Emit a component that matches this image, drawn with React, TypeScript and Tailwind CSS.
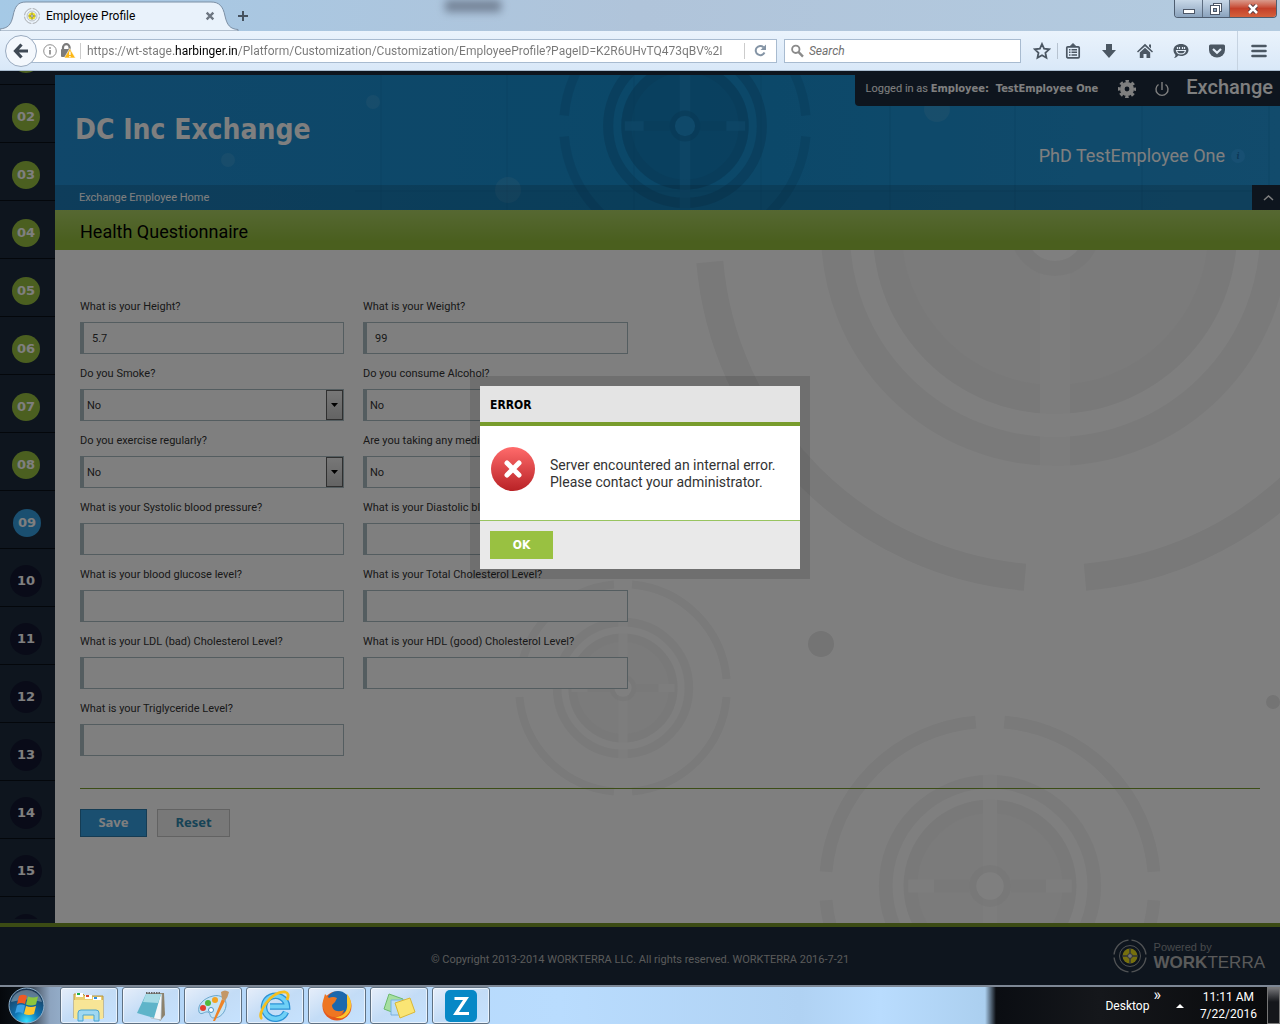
import { useState } from "react";

type Field = { id: string; label: string; type: "text" | "select"; value: string };

const fields: Field[] = [
    { id: "height", label: "What is your Height?", type: "text", value: "5.7" },
    { id: "weight", label: "What is your Weight?", type: "text", value: "99" },
    { id: "smoke", label: "Do you Smoke?", type: "select", value: "No" },
    { id: "alcohol", label: "Do you consume Alcohol?", type: "select", value: "No" },
    { id: "exercise", label: "Do you exercise regularly?", type: "select", value: "No" },
    { id: "medication", label: "Are you taking any medication?", type: "select", value: "No" },
    { id: "systolic", label: "What is your Systolic blood pressure?", type: "text", value: "" },
    { id: "diastolic", label: "What is your Diastolic blood pressure?", type: "text", value: "" },
    { id: "glucose", label: "What is your blood glucose level?", type: "text", value: "" },
    { id: "total", label: "What is your Total Cholesterol Level?", type: "text", value: "" },
    { id: "ldl", label: "What is your LDL (bad) Cholesterol Level?", type: "text", value: "" },
    { id: "hdl", label: "What is your HDL (good) Cholesterol Level?", type: "text", value: "" },
    { id: "triglyceride", label: "What is your Triglyceride Level?", type: "text", value: "" },
];

const steps = ["02", "03", "04", "05", "06", "07", "08", "09", "10", "11", "12", "13", "14", "15"];

// crosshair emblem used as a watermark, radius 360 before scaling
const Target = ({ x, y, scale, color, back, outer }: { x: number; y: number; scale: number; color: string; back: string; outer: number }) => (
    <g transform={`translate(${x} ${y}) scale(${scale})`} stroke={color} fill="none">
        {[0, 90, 180, 270].map((a) => (
            <path key={a} transform={`rotate(${a})`} d="M30 345.2A346.5 346.5 0 0 0 345.2 30" strokeWidth="27" strokeOpacity={outer} />
        ))}
        <circle r="219.5" strokeWidth="29" strokeOpacity=".5" />
        <circle r="182" fill={color} fillOpacity=".45" stroke="none" />
        <circle r="167.5" strokeWidth="29" strokeOpacity=".3" />
        <path d="M0-234V234" stroke={back} strokeWidth="30" strokeOpacity=".6" />
        <path d="M-172 0H-118M118 0H172" stroke={back} strokeWidth="27" strokeOpacity=".6" />
        <path d="M-118 0H-44M44 0H118" strokeWidth="27" strokeOpacity=".25" />
        <circle r="29" fill={back} stroke="none" />
        <circle r="36.5" strokeWidth="15" strokeOpacity=".5" />
    </g>
);

const Emblem = ({ size, ring }: { size: number; ring: string }) => (
    <svg width={size} height={size} viewBox="0 0 34 34" fill="none" stroke={ring}>
        {[0, 90, 180, 270].map((a) => (
            <path key={a} transform={`rotate(${a} 17 17)`} d="M18.5 1.1A16 16 0 0 1 32.9 15.5" strokeWidth="1.4" />
        ))}
        <circle cx="17" cy="17" r="10.5" strokeWidth="1" />
        <circle cx="17" cy="17" r="7.5" fill="#efe01c" stroke="none" />
        <path d="M17 9v16M9 17h16" stroke="#5c6470" strokeWidth="1.4" />
        <circle cx="17" cy="17" r="2.4" fill="#e8e8e8" stroke="#5c6470" />
    </svg>
);

const TabStrip = () => (
    <div className="relative flex h-[31px] justify-between overflow-hidden bg-linear-to-r from-[#a5c9e6] via-[#b0c4da] to-[#b3cbe0]">
        <div className="absolute top-0 left-[445px] h-3 w-14 bg-[#5b6678] opacity-70 blur-[4px]" />
        <div className="relative flex">
            <div className="relative flex w-[232px] items-center pl-6">
                <svg className="absolute top-0 left-0" width="240" height="31" fill="none">
                    <path d="M0 31V29C8 28 11 25 13 16C15 6 18 2 26 2H211C219 2 223 6 225 16C227 25 230 29 238 29.500V31Z" fill="#e9f2fb" stroke="#7d90a5" />
                </svg>
                <div className="relative flex w-full items-center">
                    <Emblem size={16} ring="#8b8b8b" />
                    <span className="ml-[6px] flex-1 text-xs text-black">Employee Profile</span>
                    <button aria-label="Close tab" className="mr-[17px]">
                        <svg width="10" height="10" viewBox="0 0 12 12" stroke="#6d7681" strokeWidth="2.800">
                            <path d="M2 2l8 8M10 2l-8 8" />
                        </svg>
                    </button>
                </div>
            </div>
            <button aria-label="New tab" className="ml-[5px]">
                <svg width="12" height="12" viewBox="0 0 12 12" stroke="#46525f" strokeWidth="2">
                    <path d="M6 1v10M1 6h10" />
                </svg>
            </button>
        </div>
        <div className="relative mr-[3px] flex h-[18px] overflow-hidden rounded-b border border-t-0 border-[#4e5d70]">
            <button aria-label="Minimize" className="flex w-7 items-center justify-center border-r border-[#5d6d80] bg-linear-to-b from-[#c8d8e8] to-[#8ba3bd]">
                <svg width="14" height="14" viewBox="0 0 14 14"><rect x="1.500" y="7.500" width="11" height="4" fill="#fff" stroke="#4c5666" /></svg>
            </button>
            <button aria-label="Restore" className="flex w-[27px] items-center justify-center border-r border-[#5d6d80] bg-linear-to-b from-[#c8d8e8] to-[#8ba3bd]">
                <svg width="14" height="14" viewBox="0 0 14 14" fill="#fff" stroke="#4c5666">
                    <rect x="4.500" y="1.500" width="8" height="8" />
                    <rect x="1.500" y="3.500" width="9" height="9" />
                    <rect x="4.500" y="6.500" width="3" height="3" fill="#8ba3bd" />
                </svg>
            </button>
            <button aria-label="Close" className="flex w-[46px] items-center justify-center bg-linear-to-b from-[#d99a8c] via-[#c4402a] to-[#d4603c]">
                <svg width="14" height="14" viewBox="0 0 14 14" fill="none">
                    <path d="M3.500 3.500l7 7M10.500 3.500l-7 7" stroke="#4c3840" strokeWidth="4.500" />
                    <path d="M3 3l8 8M11 3l-8 8" stroke="#fff" strokeWidth="2.500" />
                </svg>
            </button>
        </div>
    </div>
);

const NavBar = () => (
    <div className="flex h-10 items-center border-b border-[#a9bccf] bg-linear-to-b from-[#eaf3fc] to-[#d9e8f8] pl-[5px]">
        <button aria-label="Back" className="relative z-10 flex size-8 shrink-0 items-center justify-center rounded-full border border-[#9aabc0] bg-[#f4f8fd]">
            <svg width="16" height="16" viewBox="0 0 16 16" fill="none" stroke="#3f4955" strokeWidth="3.200">
                <path d="M8.500 1.500L2.500 8l6 6.500M3 8h12" />
            </svg>
        </button>
        <div className="-ml-2 flex h-6 flex-1 items-center border border-[#a8bbd0] bg-white pl-[13px]">
            <svg width="14" height="14" viewBox="0 0 14 14" fill="none" stroke="#8f8f8f">
                <circle cx="7" cy="7" r="6.300" />
                <path d="M7 6v4.500M7 3.200v1.600" strokeWidth="1.800" />
            </svg>
            <svg className="ml-[3px]" width="16" height="16" viewBox="0 0 16 16" fill="none">
                <path d="M3 7V4.500a3.300 3.300 0 0 1 6.600 0V7" stroke="#7b7b7b" strokeWidth="2.200" />
                <rect x="1" y="6" width="10" height="8" rx="1" fill="#7b7b7b" />
                <path d="M9.800 5.500L15.500 15H4.200Z" fill="#fdb714" stroke="#fff" strokeWidth=".6" />
                <path d="M9.900 8.500v3.500M9.900 13v1.200" stroke="#fff" strokeWidth="1.400" />
            </svg>
            <div className="ml-1 h-4 border-l border-[#ccc]" />
            <input
                aria-label="Address"
                className="ml-[6px] min-w-0 flex-1 bg-[linear-gradient(90deg,#777_87px,#000_87px,#000_151px,#777_151px)] bg-clip-text text-xs text-transparent outline-none"
                defaultValue="https://wt-stage.harbinger.in/Platform/Customization/Customization/EmployeeProfile?PageID=K2R6UHvTQ473qBV%2I"
            />
            <button aria-label="Reload" className="flex h-4 w-8 items-center justify-center border-l border-[#ccc]">
                <svg width="13" height="13" viewBox="0 0 13 13" fill="none">
                    <path d="M10.500 8.500A4.600 4.600 0 1 1 9.500 3.200" stroke="#8494a5" strokeWidth="2" />
                    <path d="M12 .5V6H6.500Z" fill="#8494a5" />
                </svg>
            </button>
        </div>
        <label className="ml-[7px] flex h-6 w-[237px] items-center border border-[#a8bbd0] bg-white pl-[6px]">
            <svg width="14" height="14" viewBox="0 0 14 14" fill="none" stroke="#8a8a8a">
                <circle cx="5.200" cy="5.200" r="4" strokeWidth="2" />
                <path d="M8 8l5 5" strokeWidth="2.600" />
            </svg>
            <input aria-label="Search" placeholder="Search" className="ml-[5px] w-full text-xs italic outline-none placeholder:text-[#6f6f6f]" />
        </label>
        <div className="flex h-full items-center text-[#4b5763]">
            <button aria-label="Bookmark" className="ml-3">
                <svg width="18" height="18" viewBox="0 0 18 18" fill="none" stroke="currentColor" strokeWidth="1.800">
                    <path d="M9 2l2.100 4.700 5.100.6-3.800 3.500 1 5L9 13.300l-4.500 2.500 1-5L1.800 7.300l5.100-.6Z" />
                </svg>
            </button>
            <div className="ml-[6px] h-4 border-l border-[#b7c3d0]" />
            <button aria-label="Library" className="ml-[7px]">
                <svg width="16" height="16" viewBox="0 0 16 16" fill="none" stroke="currentColor">
                    <rect x="1.800" y="3.800" width="12.400" height="11" rx="1" strokeWidth="1.700" />
                    <path d="M5 3.500L8 .5l3 3Z" fill="currentColor" />
                    <path d="M4 6.700h1.500M4 9.300h1.500M4 12h1.500M6.500 6.700H12M6.500 9.300H12M6.500 12H12" strokeWidth="1.400" />
                </svg>
            </button>
            <button aria-label="Downloads" className="ml-5">
                <svg width="16" height="16" viewBox="0 0 16 16"><path d="M5 1h6v6h4l-7 8-7-8h4Z" fill="currentColor" /></svg>
            </button>
            <button aria-label="Home" className="ml-5">
                <svg width="16" height="16" viewBox="0 0 16 16" fill="currentColor">
                    <path d="M8 .8L16 8.500l-1 1.100L8 3.200 1 9.600 0 8.500ZM12 1.500h2v4l-2-2Z" />
                    <path d="M8 4.800L13.200 9.500V15H9.500v-4h-3v4H2.800V9.500Z" />
                </svg>
            </button>
            <button aria-label="Hello" className="ml-5">
                <svg width="16" height="16" viewBox="0 0 16 16">
                    <path d="M8 1c4.300 0 7.500 2.600 7.500 6s-3.200 6-7.500 6c-1 0-2-.1-2.800-.4C4 14 2.800 14.800 1 15c1-1 1.500-2 1.500-3C1.200 10.500.5 9 .5 7 .5 3.600 3.700 1 8 1Z" fill="currentColor" />
                    <path d="M3.500 7.500c.8 4.500 8.200 4.500 9 0Z" fill="none" stroke="#e3edf8" strokeWidth="1.200" />
                    <path d="M4.500 4v2M6.500 4v2M9.500 4v2M11.500 4v2" stroke="#e3edf8" strokeWidth="1.200" />
                </svg>
            </button>
            <button aria-label="Pocket" className="ml-5">
                <svg width="16" height="16" viewBox="0 0 16 16">
                    <path d="M1.500 1.500h13q1.500 0 1.500 1.500v4a8 7.500 0 0 1-16 0V3q0-1.500 1.500-1.500Z" fill="currentColor" />
                    <path d="M4 6l4 3.700L12 6" fill="none" stroke="#e3edf8" strokeWidth="2.200" />
                </svg>
            </button>
            <div className="ml-3 h-full border-l border-[#c6d3e1]" />
            <button aria-label="Open menu" className="mx-[13px]">
                <svg width="16" height="14" viewBox="0 0 16 14" stroke="currentColor" strokeWidth="2.600" strokeLinecap="round">
                    <path d="M1.500 2h13M1.500 7h13M1.500 12h13" />
                </svg>
            </button>
        </div>
    </div>
);

const Sidebar = () => (
    <nav className="w-[55px] shrink-0 bg-[#1c2b3d] font-['DejaVu_Sans',Verdana,sans-serif]">
        <div className="flex h-[14px] flex-col items-start justify-end overflow-hidden border-b border-[#080e16] pb-[11px] pl-3">
            <div className="size-7 shrink-0 rounded-full bg-[#96be40]" />
        </div>
        {steps.map((step) => {
            const done = Number(step) < 9;
            const current = step === "09";
            return (
                <a key={step} href={"#" + step} className="flex h-[58px] items-center border-b border-[#080e16] pt-[6px] pl-[10px]">
                    <span
                        className={
                            "flex items-center justify-center rounded-full text-[13px] font-bold text-white " +
                            (current ? "ml-[3px] size-7 bg-[#359ee0]" : done ? "ml-[2px] size-7 bg-[#96be40]" : "size-8 bg-[#131730]")
                        }
                    >
                        {step}
                    </span>
                </a>
            );
        })}
        <div className="h-[22px] overflow-hidden pt-[17px] pl-[10px]">
            <div className="size-8 rounded-full bg-[#131730]" />
        </div>
    </nav>
);

const Header = () => (
    <header className="relative overflow-hidden bg-linear-to-r from-[#208fd4] via-[#1690d2] to-[#2496d8] text-white">
        <svg className="absolute top-0 left-0" width="1225" height="135">
            {[326, 452, 579, 706, 835, 960, 1087, 1214].map((x) => (
                <path key={x} d={`M${x} 0V135`} stroke="#1279b4" strokeOpacity=".4" />
            ))}
            <path d="M300 116H1225" stroke="#1279b4" strokeOpacity=".4" />
            <Target x={630} y={51} scale={0.35} color="#0f6ea6" back="#1f92d4" outer={0.35} />
            <g fill="#6ab6e0" fillOpacity=".25">
                <circle cx="318" cy="27" r="7" />
                <circle cx="173" cy="85" r="7" />
                <circle cx="453" cy="115" r="13" />
                <circle cx="882" cy="34" r="13" />
            </g>
        </svg>
        <div className="relative flex h-[110px] justify-between pl-5">
            <h1 className="self-center font-['DejaVu_Sans_Condensed','DejaVu_Sans',sans-serif] text-[28px] leading-8 font-bold">DC Inc Exchange</h1>
            <div className="flex flex-col items-end justify-between pb-[17px]">
                <div className="flex h-[31px] items-center rounded-bl bg-[#1c2b3d] pr-[7px] pb-[3px] pl-[11px] text-[11px]">
                    <span className="pt-px">
                        Logged in as{" "}
                        <b className="font-['DejaVu_Sans_Condensed','DejaVu_Sans',sans-serif]">Employee:&nbsp; TestEmployee One</b>
                    </span>
                    <button aria-label="Settings" className="ml-5">
                        <svg width="18" height="18" viewBox="0 0 18 18" fill="none" stroke="#fff">
                            <circle cx="9" cy="9" r="4.700" strokeWidth="4.600" />
                            <circle cx="9" cy="9" r="7.900" strokeWidth="2.600" strokeDasharray="3.400 2.800" strokeDashoffset="1.700" />
                        </svg>
                    </button>
                    <button aria-label="Log out" className="ml-[18px]">
                        <svg width="16" height="16" viewBox="0 0 16 16" fill="none" stroke="#fff" strokeWidth="1.400">
                            <path d="M4.500 3.500a6 6 0 1 0 7 0M8 1v8" />
                        </svg>
                    </button>
                    <span className="ml-4 pb-1 text-xl leading-6 font-medium">Exchange</span>
                </div>
                <div className="flex items-center gap-[6px] pr-[35px]">
                    <span className="text-lg leading-6">PhD TestEmployee One</span>
                    <span className="flex size-[14px] items-center justify-center rounded-full bg-[#2f9fe4] font-serif text-[10px] font-bold text-[#1a70b0] italic">i</span>
                </div>
            </div>
        </div>
        <div className="relative flex h-[25px] items-center justify-between bg-[#102c40]/20 pl-6 text-[11px]">
            <a href="#home" className="pt-[2px]">Exchange Employee Home</a>
            <button aria-label="Collapse header" className="flex h-full w-7 items-center justify-center bg-[#1c2b3d] pl-1">
                <svg width="11" height="6" viewBox="0 0 11 6" fill="none" stroke="#fff" strokeWidth="1.500"><path d="M1 5l4.500-4L10 5" /></svg>
            </button>
        </div>
    </header>
);

const FormField = ({ field }: { field: Field }) => (
    <div className="flex flex-col gap-[6px]">
        <label htmlFor={field.id} className="leading-[18px]">{field.label}</label>
        {field.type === "text" ? (
            <input id={field.id} defaultValue={field.value} className="h-8 w-full border border-l-4 border-[#a8bac0] bg-white px-2 pt-px outline-none" />
        ) : (
            <div className="relative">
                <select id={field.id} defaultValue={field.value} className="h-8 w-full appearance-none border border-l-4 border-[#a8bac0] bg-white px-[3px] pt-[2px] outline-none">
                    <option>No</option>
                    <option>Yes</option>
                </select>
                <span className="pointer-events-none absolute top-px right-px flex h-[30px] w-[17px] items-center justify-center border border-[#606060] bg-linear-to-b from-[#efefef] to-[#c8c8c8]">
                    <svg width="7" height="4"><path d="M0 0h7L3.500 4Z" fill="#000" /></svg>
                </span>
            </div>
        )}
    </div>
);

const Questionnaire = () => (
    <main className="relative flex-1 overflow-hidden bg-white">
        <svg className="absolute top-0 left-0" width="1225" height="673">
            <Target x={1000} y={-18} scale={1} color="#ebebeb" back="#fff" outer={0.65} />
            <Target x={568} y={438} scale={0.3} color="#ebebeb" back="#fff" outer={0.55} />
            <Target x={935} y={636} scale={0.475} color="#ebebeb" back="#fff" outer={0.55} />
            <g fill="#e8e8e8">
                <circle cx="766" cy="394" r="13" />
                <circle cx="1218" cy="452" r="7" />
            </g>
        </svg>
        <form className="relative pt-12 pr-5 pl-[25px] text-[11px] text-[#333]" onSubmit={(e) => e.preventDefault()}>
            <div className="grid grid-cols-[264px_265px] gap-x-[19px] gap-y-[11px]">
                {fields.map((field) => <FormField key={field.id} field={field} />)}
            </div>
            <div className="mt-8 flex gap-[10px] border-t border-[#789a2c] pt-5 font-['Noto_Sans',sans-serif] text-[13px] font-bold">
                <button type="submit" className="h-7 w-[67px] border border-[#2a78a8] bg-[#359ee0] text-white">Save</button>
                <button type="reset" className="h-7 w-[73px] border border-[#c4c4c4] bg-[#f0f0f0] text-[#2f86ac]">Reset</button>
            </div>
        </form>
    </main>
);

const Footer = () => (
    <footer className="grid h-[62px] grid-cols-[1fr_auto_1fr] items-center border-t-4 border-[#769628] bg-[#1c2b3d] text-[#b4b4b4]">
        <p className="col-start-2 pt-2 text-[11px]">© Copyright 2013-2014 WORKTERRA LLC. All rights reserved. WORKTERRA 2016-7-21</p>
        <div className="flex items-center justify-end gap-[7px] pr-[15px]">
            <Emblem size={34} ring="#a0a4a8" />
            <div className="font-['Liberation_Sans',Arial,sans-serif]">
                <div className="text-[11px] leading-[14px] text-[#909498]">Powered by</div>
                <div className="text-[17px] leading-[18px]"><b>WORK</b>TERRA</div>
            </div>
        </div>
    </footer>
);

const ErrorDialog = ({ onClose }: { onClose: () => void }) => (
    <div className="absolute inset-0 flex items-start justify-center bg-black/50 pt-[305px]">
        <div role="alertdialog" aria-labelledby="error-title" className="border-[10px] border-black/12 bg-clip-padding">
            <div className="w-80">
                <h2 id="error-title" className="border-b-4 border-[#789c2c] bg-[#e4e4e4] px-[10px] pt-[10px] pb-2 font-['DejaVu_Sans_Condensed','DejaVu_Sans',sans-serif] text-xs leading-[18px] font-bold text-black">ERROR</h2>
                <div className="flex h-[94px] gap-[14px] bg-white px-[10px] pt-5">
                    <svg className="shrink-0" width="46" height="46" viewBox="0 0 46 46">
                        <defs>
                            <linearGradient id="red" x1="0" x2="0" y1="0" y2="1">
                                <stop offset="0" stopColor="#ff6b6b" />
                                <stop offset="1" stopColor="#b92226" />
                            </linearGradient>
                        </defs>
                        <circle cx="23" cy="23" r="22" fill="url(#red)" />
                        <path d="M17 17l12 12M29 17l-12 12" stroke="#fff" strokeWidth="5" strokeLinecap="round" />
                    </svg>
                    <p className="pt-[11px] text-sm leading-[17px] whitespace-nowrap text-[#333]">
                        Server encountered an internal error.<br />Please contact your administrator.
                    </p>
                </div>
                <div className="border-t border-[#98c460] bg-[#e9e9e9] p-[10px]">
                    <button onClick={onClose} className="block h-7 w-[63px] bg-[#99c141] font-['DejaVu_Sans_Condensed','DejaVu_Sans',sans-serif] text-xs font-bold text-white">OK</button>
                </div>
            </div>
        </div>
    </div>
);

const taskIcons = [
    {
        name: "Explorer",
        icon: (
            <>
                <path d="M2 5h9l2 2h18v22H2Z" fill="#e9cf74" stroke="#b9953c" />
                <path d="M4 4h7v4H4ZM13 6h7v4h-7ZM21 8h8v4h-8Z" fill="#fff" />
                <path d="M5 4h3v2H5Z" fill="#18b04a" />
                <path d="M14 6h3v2h-3Z" fill="#d8432e" />
                <path d="M22 8h3v2h-3Z" fill="#2f8fe0" />
                <path d="M2 11h29v19H2Z" fill="#f7e596" />
                <path d="M6 32v-8q0-3 3-3h15q3 0 3 3v8h-5v-6H11v6Z" fill="#9fd8f2" stroke="#4ba4cf" />
            </>
        ),
    },
    {
        name: "Notepad",
        icon: (
            <>
                <path d="M13 4h17l1 22-5 6Z" fill="#8d826c" />
                <path d="M13 5h15l-1 26-10-2Z" fill="#f4f6f7" stroke="#9aa6ad" strokeWidth=".6" />
                <path d="M12 5h15l-7 24-17-5Z" fill="#5fb4c9" />
                <path d="M12 5h15l-3 9-15-1Z" fill="#a7dbe6" />
                <path d="M12 4h15" stroke="#666" strokeWidth="2" strokeDasharray="1.500 1" />
            </>
        ),
    },
    {
        name: "Paint",
        icon: (
            <>
                <path d="M17 7c8-2 14 3 13 10s-6 12-12 12c-5 0-3-5-6-6s-7 4-9 0C1 16 8 9 17 7Z" fill="#c5e4f6" stroke="#6aa6cc" />
                <circle cx="7" cy="19" r="3" fill="#e23e32" />
                <circle cx="12" cy="14" r="3" fill="#50b93c" />
                <circle cx="19" cy="11" r="3" fill="#f2a322" />
                <circle cx="15" cy="21" r="2.500" fill="#fff" stroke="#4a90c0" />
                <path d="M26 10l3 2-10 20-2 0Z" fill="#ee8427" />
                <path d="M25 3q4-3 8 0-1 5-4 9l-3-2Z" fill="#c49766" />
            </>
        ),
    },
    {
        name: "Internet Explorer",
        icon: (
            <>
                <path d="M28 23A11.500 11.500 0 1 1 29 17.500H12" fill="none" stroke="#2c93d6" strokeWidth="6.500" />
                <path d="M28 23A11.500 11.500 0 1 1 29 17.500H12" fill="none" stroke="#6fd0f6" strokeWidth="4" />
                <path d="M4 30C-2 25 13 2 27 3q5 1 2 8" fill="none" stroke="#f6bf20" strokeWidth="2.800" />
            </>
        ),
    },
    {
        name: "Firefox",
        icon: (
            <>
                <circle cx="17" cy="17" r="14.500" fill="#e4571c" />
                <circle cx="18" cy="13.500" r="11.500" fill="#1d68ad" />
                <path d="M27 5c5 5 6 15 0 21-4 4-8 4-12 2 9 0 13-6 12-14Z" fill="#fcc52c" />
                <path d="M3 12L5 5l4 4q4-2 8 0l-2 4-3 3c0 5 5 8 12 5-3 9-14 9-19 2-2-3-3-7-2-11Z" fill="#ee7622" />
            </>
        ),
    },
    {
        name: "Sticky Notes",
        icon: (
            <>
                <path d="M7 5l14 5-6 15L2 20Z" fill="#a6dfa0" stroke="#6cba6c" />
                <path d="M9 11h14v15H9Z" fill="#b9dcf6" stroke="#78b2e0" />
                <path d="M13 14l15-5 5 14-15 6Z" fill="#fae574" stroke="#d9b738" />
            </>
        ),
    },
    {
        name: "Zoho",
        icon: (
            <>
                <rect x="1" y="1" width="32" height="32" rx="5" fill="#0788c6" />
                <path d="M10.500 9.500H22L12 24.500H25" fill="none" stroke="#fff" strokeWidth="3.200" />
            </>
        ),
    },
];

const Taskbar = () => (
    <div className="flex h-[39px] items-stretch border-t-2 border-[#7d8795] bg-[linear-gradient(90deg,#05080c_0,#0c1218_20px,#8da4bf_50px,#b4d5f6_120px,#b9dcfe_560px,#b0d2f3_800px,#b9dcfe_880px,#abcfef_985px,#0a0d12_996px,#15171b_1100px,#08090b_1280px)] text-xs text-white">
        <button aria-label="Start" className="flex w-[60px] items-center pl-2">
            <svg width="37" height="37" viewBox="0 0 37 37">
                <defs>
                    <radialGradient id="orb" cx=".5" cy=".95" r=".9">
                        <stop offset="0" stopColor="#35e0ff" />
                        <stop offset=".4" stopColor="#0f74b4" />
                        <stop offset="1" stopColor="#1c3550" />
                    </radialGradient>
                </defs>
                <circle cx="18.500" cy="18.500" r="17.500" fill="url(#orb)" stroke="#8fb0cb" />
                <path d="M3 15a16 16 0 0 1 31 0q-15-5-31 0Z" fill="#fff" fillOpacity=".3" />
                <path d="M11 9q4-2.500 8 0l-2 8q-4-2-8 0Z" fill="#ee5a24" />
                <path d="M20 9.500q5 2 10 0l-2 8q-5 2-10 0Z" fill="#8cc63e" />
                <path d="M9 18.500q4-2 8 0l-2 8q-4-2.500-8 0Z" fill="#3aa0e4" />
                <path d="M18 19q5 2 10 0l-2 8q-5 2-10 0Z" fill="#fdc62f" />
            </svg>
        </button>
        <div className="flex gap-1">
            {taskIcons.map((task) => (
                <button
                    key={task.name}
                    aria-label={task.name}
                    className="flex w-[58px] items-center justify-center rounded-[3px] border border-[#5f7183] bg-linear-to-br from-[#e6eefa] via-[#c3dcf6] to-[#c6e2fe] inset-ring inset-ring-white/60"
                >
                    <svg width="34" height="34" viewBox="0 0 34 34">{task.icon}</svg>
                </button>
            ))}
        </div>
        <div className="ml-auto flex items-center">
            <span>Desktop</span>
            <span className="ml-1 self-start text-base leading-4">»</span>
            <svg className="ml-[15px]" width="8" height="4"><path d="M4 0l4 4H0Z" fill="#fff" /></svg>
            <div className="ml-4 text-center leading-[17px]">11:11 AM<br />7/22/2016</div>
            <button aria-label="Show desktop" className="ml-[10px] h-full w-[13px] border border-[#777] bg-linear-to-b from-[#77777a] to-[#15171b] to-40%" />
        </div>
    </div>
);

const App = () => {

    const [showError, setShowError] = useState<boolean>(true);

    return (
        <div className="flex min-h-screen flex-col font-[Roboto,Tahoma,sans-serif]">
            <TabStrip />
            <NavBar />
            <div className="relative flex flex-1 flex-col bg-[#1c2b3d]">
                <div className="flex flex-1">
                    <Sidebar />
                    <div className="flex min-w-0 flex-1 flex-col pt-1">
                        <Header />
                        <h2 className="h-10 bg-linear-to-b from-[#acd064] to-[#94be3c] to-80% pl-[25px] text-lg leading-[44px] text-black">Health Questionnaire</h2>
                        <Questionnaire />
                    </div>
                </div>
                <Footer />
                {showError && <ErrorDialog onClose={() => setShowError(false)} />}
            </div>
            <Taskbar />
        </div>
    );
}
export default App;
